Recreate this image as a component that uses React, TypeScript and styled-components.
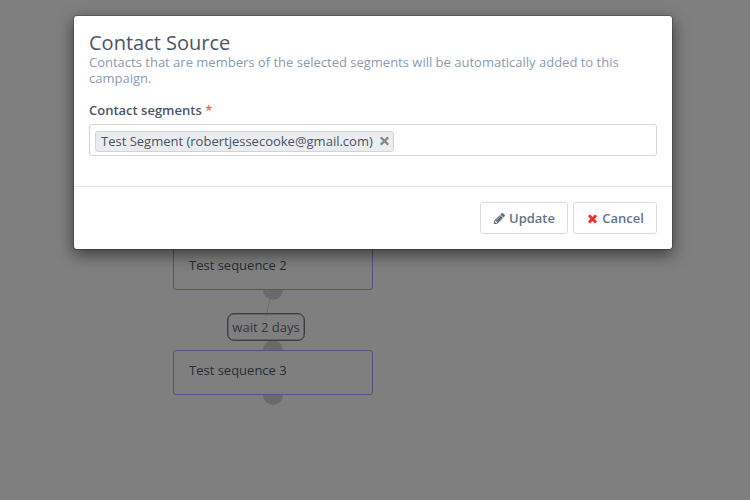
import React from "react";
import styled, { createGlobalStyle } from "styled-components";

const GlobalStyle = createGlobalStyle`
  * { box-sizing: border-box; }
  body {
    margin: 0;
    overflow: hidden;
    background: #fff;
    color: #47535f;
    font: 13px/1.25 "Open Sans", sans-serif;
  }
`;

const Page = styled.div`
  position: relative;
  width: 750px;
  height: 500px;
  overflow: hidden;
`;

const Canvas = styled.div`
  position: absolute;
  inset: 0;
`;

const EventNode = styled.div<{ $top: number }>`
  position: absolute;
  left: 173px;
  top: ${(p) => p.$top}px;
  width: 200px;
  height: 45px;
  padding: 10px 15px;
  line-height: 18px;
  color: #4d5966;
  background: #fff;
  border: 1px solid #99abff;
  border-radius: 3px;
`;

const Anchor = styled.div<{ $top: number }>`
  position: absolute;
  left: 263px;
  top: ${(p) => p.$top}px;
  width: 20px;
  height: 20px;
  border-radius: 50%;
  background: #d5d5d5;
`;

const Connector = styled.svg`
  position: absolute;
  left: 255px;
  top: 290px;
`;

const DelayLabel = styled.div`
  position: absolute;
  left: 227px;
  top: 313px;
  width: 78px;
  height: 28px;
  line-height: 27px;
  text-align: center;
  white-space: nowrap;
  color: #626e7b;
  background: rgba(255, 255, 255, 0.7);
  border: 1px solid #727c87;
  border-radius: 7px;
  box-shadow: inset 0 0 0 0.5px #8b949c;
`;

const Backdrop = styled.div`
  position: absolute;
  inset: 0;
  padding: 15px 0 0 73px;
  background: rgba(0, 0, 0, 0.5);
`;

const Dialog = styled.section`
  width: 600px;
  height: 235px;
  display: flex;
  flex-direction: column;
  background: #fff;
  background-clip: padding-box;
  border: 1px solid rgba(0, 0, 0, 0.2);
  border-radius: 4px;
  box-shadow: 0 5px 15px rgba(0, 0, 0, 0.5);
`;

const Body = styled.div`
  flex: 1;
  padding: 15px 15px 0;
`;

const Title = styled.h3`
  margin: 0;
  font-size: 20px;
  font-weight: 400;
  line-height: 23px;
  color: #4a5562;
`;

const Description = styled.p`
  margin: 0;
  line-height: 16px;
  color: #8b9bae;
`;

const Label = styled.label`
  display: block;
  margin-top: 15px;
  line-height: 18px;
  font-weight: 600;
  color: #4a5665;
`;

const Required = styled.span`
  color: #fa6450;
`;

const ChosenField = styled.div`
  display: flex;
  align-items: center;
  height: 32px;
  margin-top: 5px;
  padding: 2px 5px 0;
  border: 1px solid #d3d3d3;
  border-radius: 3px;
`;

const Choice = styled.span`
  display: inline-flex;
  align-items: center;
  justify-content: space-between;
  width: 299px;
  height: 21px;
  padding: 0 4px 0 5px;
  color: #47535f;
  background: #ebecf0;
  border: 1px solid #d3d3d3;
  border-radius: 3px;
`;

const Footer = styled.footer`
  display: flex;
  justify-content: flex-end;
  gap: 5px;
  height: 63px;
  padding: 15px;
  border-top: 1px solid #e3e5e8;
`;

const Button = styled.button<{ $width: number; $gap: number; $inset?: number }>`
  display: flex;
  align-items: center;
  justify-content: center;
  gap: ${(p) => p.$gap}px;
  width: ${(p) => p.$width}px;
  height: 32px;
  padding: 0 0 0 ${(p) => p.$inset ?? 0}px;
  font: 600 13px/18px "Open Sans", sans-serif;
  color: #64748a;
  background: #fff;
  border: 1px solid #d9dbde;
  border-radius: 3px;
`;

const PencilIcon = () => (
  <svg width="13" height="13" viewBox="0 0 1792 1792" fill="#5d6c7c">
    <path d="M491 1536l91-91-235-235-91 91v107h128v128h107zm523-928q0-22-22-22-10 0-17 7l-542 542q-7 7-7 17 0 22 22 22 10 0 17-7l542-542q7-7 7-17zm-54-192l416 416-832 832h-416v-416zm683 96q0 53-37 90l-166 166-416-416 166-165q36-38 90-38 53 0 91 38l235 234q37 39 37 91z" />
  </svg>
);

const TimesIcon = () => (
  <svg width="11" height="13" viewBox="140 0 1512 1792" fill="#ff2828">
    <path d="M1490 1322q0 40-28 68l-136 136q-28 28-68 28t-68-28l-294-294-294 294q-28 28-68 28t-68-28l-136-136q-28-28-28-68t28-68l294-294-294-294q-28-28-28-68t28-68l136-136q28-28 68-28t68 28l294 294 294-294q28-28 68-28t68 28l136 136q28 28 28 68t-28 68l-294 294 294 294q28 28 28 68z" />
  </svg>
);

const RemoveIcon = () => (
  <svg width="9" height="10" viewBox="0.5 0 9 10">
    <path d="M1.3 1.3L8.7 8.7M8.7 1.3L1.3 8.7" stroke="#888" strokeWidth="2.3" />
  </svg>
);

export default function App() {
  return (
    <Page>
      <GlobalStyle />
      <Canvas>
        <Anchor $top={280} />
        <Anchor $top={340} />
        <Anchor $top={385} />
        <Connector width="30" height="55" fill="none">
          <path d="M15.5 8Q12 18 10.5 31" stroke="#d5d5d5" />
        </Connector>
        <EventNode $top={245}>Test sequence 2</EventNode>
        <EventNode $top={350}>Test sequence 3</EventNode>
        <DelayLabel>wait 2 days</DelayLabel>
      </Canvas>
      <Backdrop>
        <Dialog role="dialog" aria-modal="true">
          <Body>
            <Title>Contact Source</Title>
            <Description>
              Contacts that are members of the selected segments will be automatically added to this campaign.
            </Description>
            <Label>
              Contact segments <Required>*</Required>
            </Label>
            <ChosenField>
              <Choice>
                Test Segment (robertjessecooke@gmail.com)
                <RemoveIcon />
              </Choice>
            </ChosenField>
          </Body>
          <Footer>
            <Button $width={88} $gap={3}>
              <PencilIcon />
              Update
            </Button>
            <Button $width={84} $gap={4} $inset={1}>
              <TimesIcon />
              Cancel
            </Button>
          </Footer>
        </Dialog>
      </Backdrop>
    </Page>
  );
}
